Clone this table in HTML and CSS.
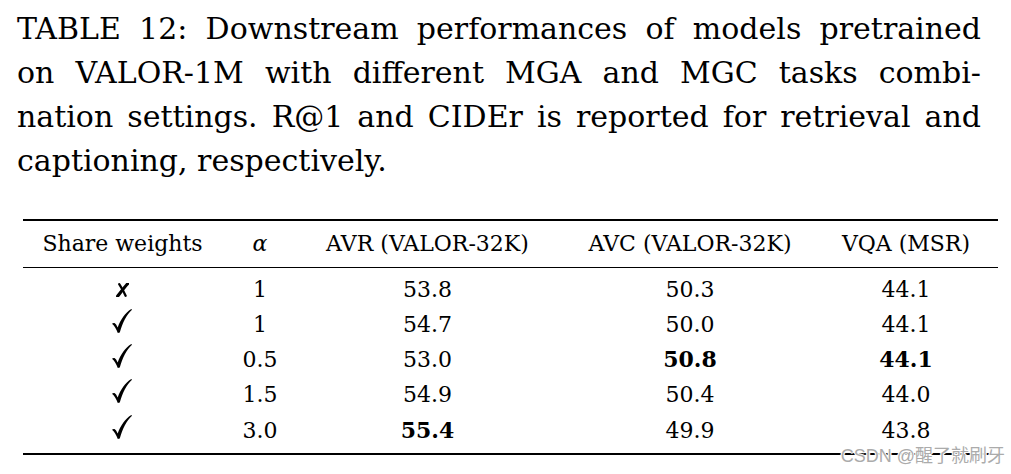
FILE: index.html
```html
<!DOCTYPE html>
<html>
<head>
<meta charset="utf-8">
<link rel="stylesheet" href="styles.css">
</head>
<body>
<div class="page">
  <div class="caption">
    <div class="cl j">TABLE 12: Downstream performances of models pretrained</div>
    <div class="cl j">on VALOR-1M with different MGA and MGC tasks combi-</div>
    <div class="cl j">nation settings. R@1 and CIDEr is reported for retrieval and</div>
    <div class="cl">captioning, respectively.</div>
  </div>

  <div class="tbl">
    <div class="row head">
      <div class="c">Share weights</div>
      <div class="c"><span class="alpha">α</span></div>
      <div class="c">AVR (VALOR-32K)</div>
      <div class="c">AVC (VALOR-32K)</div>
      <div class="c">VQA (MSR)</div>
    </div>
    <div class="tbody">
      <div class="row">
        <div class="c"><svg class="xmark" viewBox="0 0 13 14" width="13" height="14"><path d="M11.6 0.8 C8.5 4.2 5.2 8.6 1.6 13.2" fill="none" stroke="#000" stroke-width="3.1" stroke-linecap="round"/><path d="M3.2 1.2 C5.6 4.8 7.8 8.6 9.6 12.8" fill="none" stroke="#000" stroke-width="2.3" stroke-linecap="round"/></svg></div>
        <div class="c">1</div>
        <div class="c">53.8</div>
        <div class="c">50.3</div>
        <div class="c">44.1</div>
      </div>
      <div class="row">
        <div class="c"><svg class="check" viewBox="0 0 20 24" width="20" height="24"><path d="M0 14.8 C1.3 13.4 3.1 13.7 4.1 15.5 L5.7 18.4 C8.6 10.5 13 4 19.3 0 L20 0.8 C14.6 5.9 10.6 13.5 7.8 23.6 L5.8 24 C4.3 20.4 2.6 17 0 14.8 Z" fill="#000"/></svg></div>
        <div class="c">1</div>
        <div class="c">54.7</div>
        <div class="c">50.0</div>
        <div class="c">44.1</div>
      </div>
      <div class="row">
        <div class="c"><svg class="check" viewBox="0 0 20 24" width="20" height="24"><path d="M0 14.8 C1.3 13.4 3.1 13.7 4.1 15.5 L5.7 18.4 C8.6 10.5 13 4 19.3 0 L20 0.8 C14.6 5.9 10.6 13.5 7.8 23.6 L5.8 24 C4.3 20.4 2.6 17 0 14.8 Z" fill="#000"/></svg></div>
        <div class="c">0.5</div>
        <div class="c">53.0</div>
        <div class="c"><b>50.8</b></div>
        <div class="c"><b>44.1</b></div>
      </div>
      <div class="row">
        <div class="c"><svg class="check" viewBox="0 0 20 24" width="20" height="24"><path d="M0 14.8 C1.3 13.4 3.1 13.7 4.1 15.5 L5.7 18.4 C8.6 10.5 13 4 19.3 0 L20 0.8 C14.6 5.9 10.6 13.5 7.8 23.6 L5.8 24 C4.3 20.4 2.6 17 0 14.8 Z" fill="#000"/></svg></div>
        <div class="c">1.5</div>
        <div class="c">54.9</div>
        <div class="c">50.4</div>
        <div class="c">44.0</div>
      </div>
      <div class="row">
        <div class="c"><svg class="check" viewBox="0 0 20 24" width="20" height="24"><path d="M0 14.8 C1.3 13.4 3.1 13.7 4.1 15.5 L5.7 18.4 C8.6 10.5 13 4 19.3 0 L20 0.8 C14.6 5.9 10.6 13.5 7.8 23.6 L5.8 24 C4.3 20.4 2.6 17 0 14.8 Z" fill="#000"/></svg></div>
        <div class="c">3.0</div>
        <div class="c"><b>55.4</b></div>
        <div class="c">49.9</div>
        <div class="c">43.8</div>
      </div>
    </div>
  </div>

  <div class="wm">CSDN @醒了就刷牙</div>
</div>
</body>
</html>
```

FILE: styles.css
```css
html, body {
  margin: 0;
  padding: 0;
  background: #ffffff;
}

.page {
  position: relative;
  width: 1011px;
  height: 474px;
  overflow: hidden;
  color: #000;
  font-family: "DejaVu Serif", "Liberation Serif", serif;
}

.caption {
  margin: 7px 0 0 17px;
  width: 964px;
  height: 176px;
  font-size: 30px;
  line-height: 44px;
}

.cl {
  text-align: left;
}

.cl.j {
  text-align: justify;
  text-align-last: justify;
}

.tbl {
  margin: 36px 0 0 22.7px;
  width: 975.3px;
  border-top: 2px solid #000;
  border-bottom: 2px solid #000;
  font-size: 22px;
  line-height: 35.25px;
}

.row {
  display: grid;
  grid-template-columns: 199.6px 75.4px 259.6px 265.4px 166.6px;
  padding-right: 8.7px;
}

.head {
  padding: 5.4px 8.7px 5.3px 0;
  border-bottom: 1.3px solid #000;
}

.tbody {
  padding: 3.6px 0 4.8px 0;
}

.c {
  text-align: center;
  white-space: nowrap;
}

.c b {
  font-weight: bold;
}

.alpha {
  font-style: italic;
}

.check {
  vertical-align: -1px;
}

.xmark {
  vertical-align: 0;
}

.wm {
  position: absolute;
  right: 6px;
  top: 445px;
  font-family: "Liberation Sans", "Noto Sans CJK SC", sans-serif;
  font-size: 18px;
  line-height: 22px;
  color: #ababab;
  text-shadow: 0 0 2px #fff, 0 0 2px #fff, 1px 0 0 #fff, -1px 0 0 #fff, 0 1px 0 #fff, 0 -1px 0 #fff;
}
```
